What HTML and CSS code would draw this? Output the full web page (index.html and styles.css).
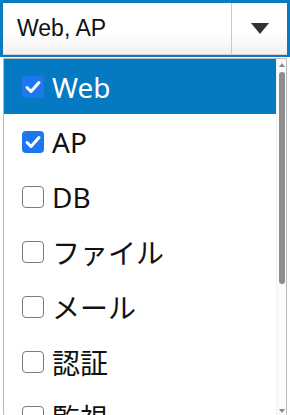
FILE: index.html
```html
<!DOCTYPE html>
<html lang="ja">
<head>
    <meta charset="UTF-8">
    <meta name="viewport" content="width=device-width, initial-scale=1.0">
    <title>Multi Select</title>
    <link rel="stylesheet" href="styles.css">
</head>
<body>

    <div class="select">
        <div class="value">Web, AP</div>
        <div class="toggle"><span class="arrow"></span></div>
    </div>

    <div class="dropdown">
        <div class="options">
            <div class="option active"><span class="box checked"></span>Web</div>
            <div class="option"><span class="box checked"></span>AP</div>
            <div class="option"><span class="box"></span>DB</div>
            <div class="option"><span class="box"></span>ファイル</div>
            <div class="option"><span class="box"></span>メール</div>
            <div class="option"><span class="box"></span>認証</div>
            <div class="option"><span class="box"></span>監視</div>
        </div>
        <div class="scrollbar">
            <span class="up"></span>
            <div class="thumb"></div>
            <span class="down"></span>
        </div>
    </div>

</body>
</html>
```

FILE: styles.css
```css
body {
    margin: 0;
    background: #fff;
    width: 290px;
    height: 415px;
    overflow: hidden;
}

/* closed select */
.select {
    display: flex;
    height: 57px;
    box-sizing: border-box;
    border: 3px solid #0a79c2;
    border-bottom-width: 2px;
}

.value {
    flex: 1;
    display: flex;
    align-items: center;
    padding-left: 14px;
    font-family: "Liberation Sans", Arial, sans-serif;
    font-size: 23px;
    color: #111;
    background: linear-gradient(#fff 55%, #f1f1f1);
    border-bottom: 1px solid #d4d4d4;
}

.toggle {
    width: 55px;
    display: flex;
    align-items: center;
    justify-content: center;
    border-left: 1px solid #c8c8c8;
    background: linear-gradient(#fff 55%, #f1f1f1);
    border-bottom: 1px solid #d4d4d4;
}

.arrow {
    width: 0;
    height: 0;
    border-left: 9px solid transparent;
    border-right: 9px solid transparent;
    border-top: 11px solid #333;
}

/* open list */
.dropdown {
    display: flex;
    margin: 1px 3px 0;
    height: 360px;
    box-sizing: border-box;
    border: 1px solid #b9b9b9;
    border-radius: 0 0 5px 5px;
    overflow: hidden;
    background: #fff;
}

.options {
    flex: 1;
    overflow: hidden;
}

.option {
    display: flex;
    align-items: center;
    height: 55px;
    padding-left: 18px;
    font-family: "Noto Sans", "Noto Sans CJK JP", sans-serif;
    font-size: 28px;
    color: #111;
}

.option.active {
    background-color: #0579c1;
    color: #fff;
}

.box {
    width: 22px;
    height: 22px;
    box-sizing: border-box;
    margin-right: 8px;
    border: 1.5px solid #7a7a7a;
    border-radius: 4px;
    background: #fff;
    flex-shrink: 0;
}

.box.checked {
    border: none;
    background: #1d77ef url("data:image/svg+xml,%3Csvg xmlns='http://www.w3.org/2000/svg' viewBox='0 0 22 22'%3E%3Cpath d='M5 11.5l4 4 8-9' fill='none' stroke='white' stroke-width='3' stroke-linecap='round' stroke-linejoin='round'/%3E%3C/svg%3E") center / 22px 22px no-repeat;
}

.scrollbar {
    width: 9px;
    display: flex;
    flex-direction: column;
    align-items: center;
    background: #fbfbfb;
    border-left: 1px solid #f0f0f0;
}

.up, .down {
    width: 0;
    height: 0;
    border-left: 3px solid transparent;
    border-right: 3px solid transparent;
}

.up {
    margin-top: 4px;
    border-bottom: 4px solid #8a8a8a;
}

.down {
    margin-top: auto;
    margin-bottom: 4px;
    border-top: 4px solid #8a8a8a;
}

.thumb {
    width: 6px;
    height: 212px;
    margin-top: 5px;
    border-radius: 3px;
    background: #8e8e8e;
}
```
